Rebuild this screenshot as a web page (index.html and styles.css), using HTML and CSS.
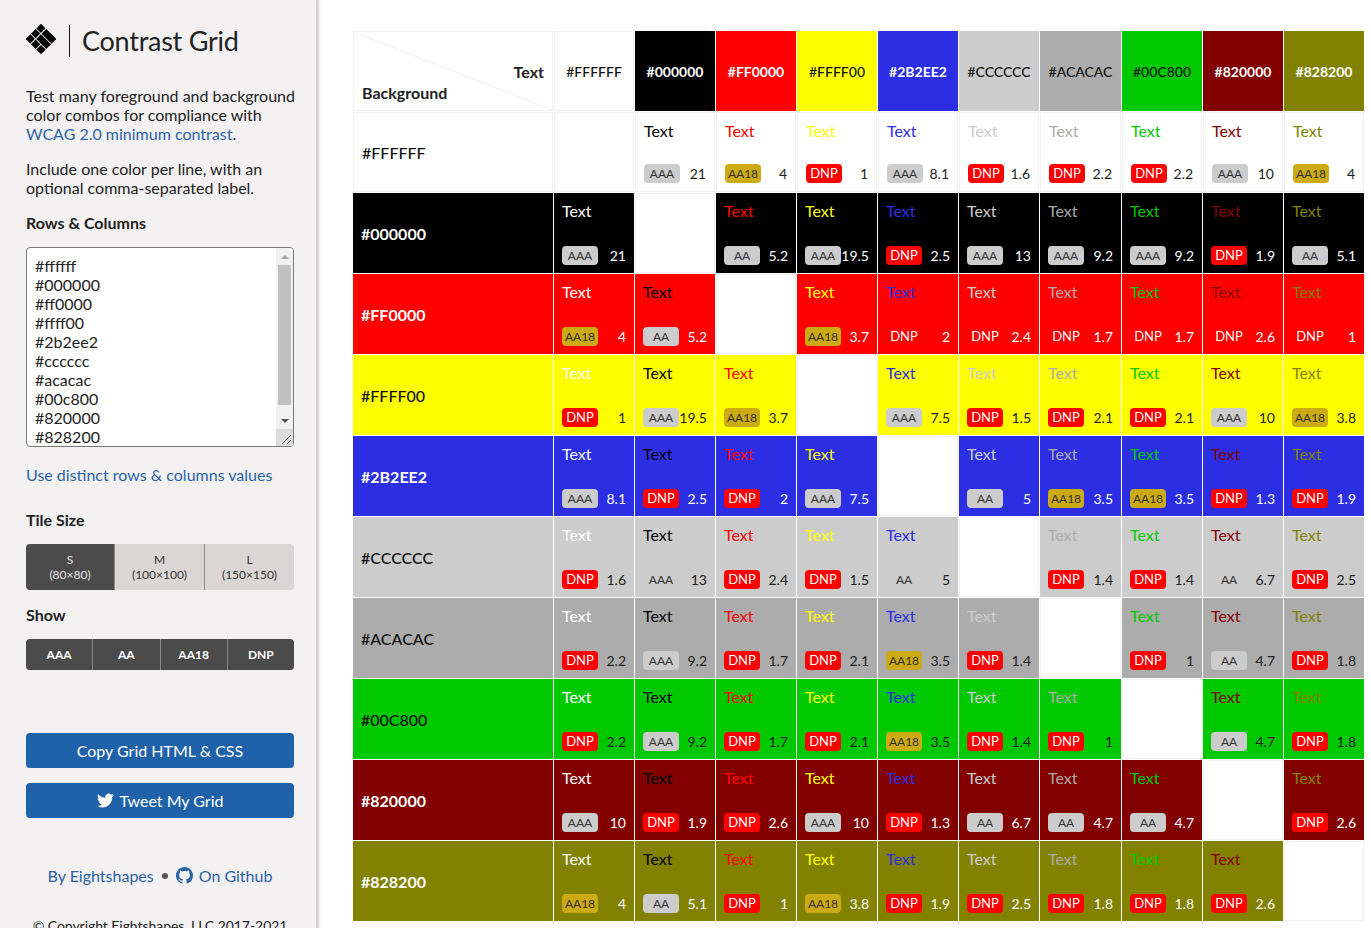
FILE: index.html

```html
<!DOCTYPE html>
<html lang="en">
<head>
<meta charset="UTF-8" />
<meta name="viewport" content="width=device-width, initial-scale=1" />
<title>Contrast Grid</title>
<link rel="stylesheet" href="styles.css">
</head>
<body>

<div class="page">
  <aside class="sidebar">
    <header class="brand">
      <svg class="brand-logo" viewBox="0 0 30 30" width="30" height="30" aria-hidden="true">
        <g transform="rotate(45 15 15)">
          <rect x="4.2" y="4.2" width="6.4" height="6.6" />
          <rect x="11.6" y="4.2" width="14.2" height="6.6" />
          <rect x="4.2" y="11.7" width="6.4" height="6.6" />
          <rect x="11.6" y="11.7" width="14.2" height="6.6" />
          <rect x="4.2" y="19.2" width="6.4" height="6.6" />
          <rect x="11.6" y="19.2" width="6.6" height="6.6" />
          <rect x="19.2" y="19.2" width="6.6" height="6.6" />
        </g>
      </svg>
      <span class="brand-rule"></span>
      <span class="brand-name">Contrast Grid</span>
    </header>

    <p class="intro">Test many foreground and background color combos for compliance with <a href="#">WCAG 2.0 minimum contrast</a>.</p>
    <p class="intro">Include one color per line, with an optional comma-separated label.</p>

    <label class="field-title colors-title" for="colors">Rows &amp; Columns</label>
    <div class="colors-box">
      <textarea id="colors" class="colors" spellcheck="false">#ffffff
#000000
#ff0000
#ffff00
#2b2ee2
#cccccc
#acacac
#00c800
#820000
#828200</textarea>
      <div class="scrollbar">
        <span class="scroll-btn"><i class="arrow-up"></i></span>
        <span class="scroll-thumb"></span>
        <span class="scroll-track"></span>
        <span class="scroll-btn"><i class="arrow-down"></i></span>
        <svg class="scroll-corner" viewBox="0 0 17 17" width="17" height="17" aria-hidden="true"><path d="M6 15L15 6M11 15L15 11" stroke="#777" fill="none"/></svg>
      </div>
    </div>
    <a class="distinct" href="#">Use distinct rows &amp; columns values</a>

    <div class="field-title size-title">Tile Size</div>
    <div class="segments sizes">
      <button class="segment size active" type="button">S<br>(80×80)</button>
      <button class="segment size" type="button">M<br>(100×100)</button>
      <button class="segment size" type="button">L<br>(150×150)</button>
    </div>

    <div class="field-title show-title">Show</div>
    <div class="segments shows">
      <button class="segment show" type="button">AAA</button>
      <button class="segment show" type="button">AA</button>
      <button class="segment show" type="button">AA18</button>
      <button class="segment show" type="button">DNP</button>
    </div>

    <button class="action copy" type="button">Copy Grid HTML &amp; CSS</button>
    <button class="action tweet" type="button">
      <svg viewBox="0 0 24 24" width="17" height="17" aria-hidden="true"><path d="M23.953 4.57a10 10 0 01-2.825.775 4.958 4.958 0 002.163-2.723c-.951.555-2.005.959-3.127 1.184a4.92 4.92 0 00-8.384 4.482C7.69 8.095 4.067 6.13 1.64 3.162a4.822 4.822 0 00-.666 2.475c0 1.71.87 3.213 2.188 4.096a4.904 4.904 0 01-2.228-.616v.06a4.923 4.923 0 003.946 4.827 4.996 4.996 0 01-2.212.085 4.936 4.936 0 004.604 3.417 9.867 9.867 0 01-6.102 2.105c-.39 0-.779-.023-1.17-.067a13.995 13.995 0 007.557 2.209c9.053 0 13.998-7.496 13.998-13.985 0-.21 0-.42-.015-.63A9.935 9.935 0 0024 4.59z"/></svg>
      Tweet My Grid
    </button>

    <div class="credits">
      <a href="#">By Eightshapes</a>
      <span class="dot"></span>
      <a class="github" href="#">
        <svg viewBox="0 0 16 16" width="17" height="17" aria-hidden="true"><path d="M8 0C3.58 0 0 3.58 0 8c0 3.54 2.29 6.53 5.47 7.59.4.07.55-.17.55-.38 0-.19-.01-.82-.01-1.49-2.01.37-2.53-.49-2.69-.94-.09-.23-.48-.94-.82-1.13-.28-.15-.68-.52-.01-.53.63-.01 1.08.58 1.23.82.72 1.21 1.87.87 2.33.66.07-.52.28-.87.51-1.07-1.78-.2-3.64-.89-3.64-3.95 0-.87.31-1.59.82-2.15-.08-.2-.36-1.02.08-2.12 0 0 .67-.21 2.2.82.64-.18 1.32-.27 2-.27.68 0 1.36.09 2 .27 1.53-1.04 2.2-.82 2.2-.82.44 1.1.16 1.92.08 2.12.51.56.82 1.27.82 2.15 0 3.07-1.87 3.75-3.65 3.95.29.25.54.73.54 1.48 0 1.07-.01 1.93-.01 2.2 0 .21.15.46.55.38A8.013 8.013 0 0016 8c0-4.42-3.58-8-8-8z"/></svg>
        On Github
      </a>
    </div>
    <div class="copyright">© Copyright Eightshapes, LLC 2017-2021</div>
  </aside>

  <main class="content">
    <div id="grid" class="grid"></div>
  </main>
</div>

<script src="grid.js"></script>

</body>
</html>
```

FILE: styles.css

```css
* { box-sizing: border-box; }
html, body { height: 100%; }
body { margin: 0; font-family: Lato, "Open Sans", sans-serif; font-size: 16px; line-height: 19px; color: #222; background: #fff; overflow: hidden; }
a { color: #2b63a8; text-decoration: none; }

.page { display: flex; height: 928px; overflow: hidden; }

.sidebar { flex: 0 0 316px; min-width: 0; height: 1000px; padding: 24px 22px 0 26px; background: #f3f1f2; box-shadow: 2px 0 2px 1px #d2d0d1; }

.brand { display: flex; align-items: center; height: 34px; margin-bottom: 28px; }
.brand-logo { flex: none; margin-bottom: 4px; }
.brand-rule { width: 1px; height: 32px; margin: 0 12px 0 13px; background: #111; }
.brand-name { font-size: 27px; line-height: 34px; letter-spacing: -.25px; color: #222; }

.intro { margin: 0 0 16px; width: 272px; }

.field-title { display: block; font-weight: 700; }
.colors-title { margin-top: 16px; }

.colors-box { position: relative; width: 268px; height: 200px; margin-top: 15px; }
.colors { display: block; width: 100%; height: 100%; padding: 8px 8px; border: 1px solid #777; border-radius: 4px; font: inherit; color: #222; background: #fff; overflow: hidden; resize: none; outline: none; }
.scrollbar { position: absolute; top: 1px; right: 1px; bottom: 1px; width: 17px; display: flex; flex-direction: column; background: #f1f1f1; border-radius: 0 3px 3px 0; }
.scroll-btn { flex: 0 0 17px; display: flex; align-items: center; justify-content: center; }
.arrow-up { border: 4px solid transparent; border-top: 0; border-bottom: 4px solid #a3a3a3; }
.arrow-down { border: 4px solid transparent; border-bottom: 0; border-top: 4px solid #505050; }
.scroll-thumb { flex: 0 0 140px; margin: 0 2px; background: #c1c1c1; }
.scroll-track { flex: 1; }
.scroll-corner { flex: none; background: #dcdcdc; }

.distinct { display: block; margin-top: 18px; }
.size-title { margin-top: 26px; }
.show-title { margin-top: 15px; }

.segments { display: flex; width: 268px; border-radius: 4px; overflow: hidden; }
.segment { border: 0; font-family: inherit; font-size: 12px; line-height: 15px; padding: 0; }
.sizes { height: 46px; margin-top: 15px; }
.size { flex: 1 1 0; background: #d9d6d5; color: #333; border-left: 1px solid #8a8a8a; }
.size.active { flex: 0 0 88px; background: #4b4b4b; color: #e4e4e4; border-left: 0; }
.shows { height: 31px; margin-top: 15px; box-shadow: inset 0 -1px 0 rgba(0, 0, 0, .2); }
.show { flex: 1 1 0; background: #4b4b4b; color: #fff; font-weight: 700; border-left: 1px solid #8a8a8a; }
.show:first-child { border-left: 0; }

.action { display: flex; align-items: center; justify-content: center; gap: 6px; width: 268px; height: 35px; border: 0; border-radius: 4px; background: #1f62aa; color: #fff; font-family: inherit; font-size: 16px; }
.action svg { fill: #fff; }
.copy { margin-top: 63px; }
.tweet { margin-top: 15px; }

.credits { display: flex; align-items: center; justify-content: center; gap: 8px; width: 268px; margin-top: 48px; }
.dot { width: 6px; height: 6px; border-radius: 50%; background: #555; }
.github { display: flex; align-items: center; gap: 6px; }
.github svg { fill: #2b63a8; }
.copyright { width: 268px; margin-top: 31px; font-size: 14px; letter-spacing: -.05px; text-align: center; }

.content { flex: 1; padding: 31px 0 0 37px; }

.grid { display: grid; grid-template-columns: 200px repeat(6, 80px) 81px repeat(3, 80px); grid-auto-rows: 80px; gap: 1px; }

.corner { display: flex; flex-direction: column; justify-content: flex-end; padding: 0 8px 8px 8px; border: 1px solid #f1f1f1; font-weight: 700; background: linear-gradient(to top right, #fff calc(50% - 1px), #f1f1f1, #fff calc(50% + 1px)); }
.corner-text { margin-bottom: 2px; text-align: right; }

.col-head { display: flex; align-items: center; justify-content: center; font-size: 14px; font-weight: 500; }
.row-head { display: flex; align-items: center; padding-left: 8px; font-weight: 500; }
.col-head.light, .row-head.light { color: #111; }
.col-head.dark, .row-head.dark { color: #fff; font-weight: 700; }
.bg-FFFFFF { border: 1px solid #f1f1f1; }

.tile { display: flex; flex-direction: column; justify-content: space-between; padding: 8px; }
.tile.light { color: #222; }
.tile.dark { color: #fff; }
.tile.empty { background: #fff; border: 1px solid #f1f1f1; }

.score { display: flex; align-items: center; justify-content: space-between; }
.badge { width: 36px; height: 19px; border-radius: 4px; font-size: 12px; line-height: 19px; text-align: center; color: #333; background: #ccc; }
.badge.aa18 { background: #ccaa14; }
.badge.dnp { background: #f00; color: #fff; font-size: 13px; }
.ratio { font-size: 14px; line-height: 19px; }
```

FILE: grid.js

```js
var colors = ["FFFFFF", "000000", "FF0000", "FFFF00", "2B2EE2", "CCCCCC", "ACACAC", "00C800", "820000", "828200"];
var lightColors = ["FFFFFF", "FFFF00", "CCCCCC", "ACACAC", "00C800"];

var ratios = [
  [0, 21, 4, 1, 8.1, 1.6, 2.2, 2.2, 10, 4],
  [21, 0, 5.2, 19.5, 2.5, 13, 9.2, 9.2, 1.9, 5.1],
  [4, 5.2, 0, 3.7, 2, 2.4, 1.7, 1.7, 2.6, 1],
  [1, 19.5, 3.7, 0, 7.5, 1.5, 2.1, 2.1, 10, 3.8],
  [8.1, 2.5, 2, 7.5, 0, 5, 3.5, 3.5, 1.3, 1.9],
  [1.6, 13, 2.4, 1.5, 5, 0, 1.4, 1.4, 6.7, 2.5],
  [2.2, 9.2, 1.7, 2.1, 3.5, 1.4, 0, 1, 4.7, 1.8],
  [2.2, 9.2, 1.7, 2.1, 3.5, 1.4, 1, 0, 4.7, 1.8],
  [10, 1.9, 2.6, 10, 1.3, 6.7, 4.7, 4.7, 0, 2.6],
  [4, 5.1, 1, 3.8, 1.9, 2.5, 1.8, 1.8, 2.6, 0]
];

function tone(color) {
  return lightColors.indexOf(color) >= 0 ? "light" : "dark";
}

function rating(ratio) {
  if (ratio >= 7) return "AAA";
  if (ratio >= 4.5) return "AA";
  if (ratio >= 3) return "AA18";
  return "DNP";
}

var html = '<div class="corner"><div class="corner-text">Text</div><div>Background</div></div>';

colors.forEach(function (color) {
  html += '<div class="col-head ' + tone(color) + ' bg-' + color + '" style="background:#' + color + '">#' + color + '</div>';
});

colors.forEach(function (bg, r) {
  html += '<div class="row-head ' + tone(bg) + ' bg-' + bg + '" style="background:#' + bg + '">#' + bg + '</div>';
  colors.forEach(function (fg, c) {
    var ratio = ratios[r][c];
    if (!ratio) {
      html += '<div class="tile empty"></div>';
      return;
    }
    var label = rating(ratio);
    html += '<div class="tile ' + tone(bg) + ' bg-' + bg + '" style="background:#' + bg + '">' +
      '<span style="color:#' + fg + '">Text</span>' +
      '<div class="score"><span class="badge ' + label.toLowerCase() + '">' + label + '</span>' +
      '<span class="ratio">' + ratio + '</span></div></div>';
  });
});

document.getElementById("grid").innerHTML = html;
```
